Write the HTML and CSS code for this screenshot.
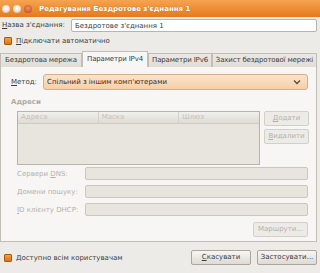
FILE: index.html
```html
<!DOCTYPE html>
<html lang="uk">
<head>
    <meta charset="UTF-8">
    <title>Редагування Бездротове з'єднання 1</title>
    <link rel="stylesheet" href="styles.css">
</head>
<body>
<div class="window">
    <div class="titlebar">
        <div class="wm-buttons">
            <span class="wm-btn"></span>
            <span class="wm-btn"></span>
            <span class="wm-btn close"></span>
        </div>
        <div class="title">Редагування Бездротове з'єднання 1</div>
    </div>

    <div class="content">
        <div class="name-row">
            <label><u>Н</u>азва з'єднання:</label>
            <div class="entry">Бездротове з'єднання 1</div>
        </div>

        <div class="check-row">
            <span class="check"></span>
            <span><u>П</u>ідключати автоматично</span>
        </div>

        <div class="tabs">
            <div class="tab t1">Бездротова мережа</div>
            <div class="tab t2 active">Параметри IPv4</div>
            <div class="tab t3">Параметри IPv6</div>
            <div class="tab t4">Захист бездротової мережі</div>
        </div>

        <div class="panel">
            <div class="method-row">
                <label><u>М</u>етод:</label>
                <div class="combo">
                    <span>Спільний з іншим комп'ютерами</span>
                    <svg width="8" height="6" viewBox="0 0 8 6"><path d="M1 1.5 L4 4.5 L7 1.5" fill="none" stroke="#5a4a3a" stroke-width="1.3"/></svg>
                </div>
            </div>

            <div class="section-title">Адреси</div>

            <div class="addr-row">
                <div class="table">
                    <div class="thead">
                        <div class="th">Адреса</div>
                        <div class="th">Маска</div>
                        <div class="th last">Шлюз</div>
                    </div>
                </div>
                <div class="side-buttons">
                    <div class="btn dis"><u>Д</u>одати</div>
                    <div class="btn dis"><u>В</u>идалити</div>
                </div>
            </div>

            <div class="fields">
                <div class="field">
                    <label>Сервери <u>D</u>NS:</label>
                    <div class="entry dis"></div>
                </div>
                <div class="field">
                    <label>Домени пошуку:</label>
                    <div class="entry dis"></div>
                </div>
                <div class="field">
                    <label><u>I</u>D клієнту DHCP:</label>
                    <div class="entry dis"></div>
                </div>
            </div>

            <div class="routes-row">
                <div class="btn dis">Маршрути...</div>
            </div>
        </div>

        <div class="footer">
            <div class="check-row">
                <span class="check"></span>
                <span>Доступно всім користувачам</span>
            </div>
            <div class="footer-buttons">
                <div class="btn"><u>С</u>касувати</div>
                <div class="btn">Застосувати...</div>
            </div>
        </div>
    </div>
</div>
</body>
</html>
```

FILE: styles.css
```css
body {
    margin: 0;
    font-family: "DejaVu Sans", sans-serif;
    font-size: 7px;
    color: #3c3c3c;
    background: #edebe8;
}
u {
    text-decoration: underline;
}
label, span {
    white-space: nowrap;
}
.window {
    width: 320px;
    height: 273px;
    display: flex;
    flex-direction: column;
    background: #edebe8;
    overflow: hidden;
}
.titlebar {
    height: 17px;
    display: flex;
    align-items: center;
    background: linear-gradient(#f6a450, #e47a1c);
    color: #fff;
    flex-shrink: 0;
}
.wm-buttons {
    display: flex;
    gap: 3px;
    width: 30px;
    margin-left: 2px;
    flex-shrink: 0;
}
.wm-btn {
    display: block;
    width: 8px;
    height: 8px;
    flex-shrink: 0;
    border-radius: 50%;
    background: radial-gradient(circle at 50% 40%, #fff 0, #f4e6d6 45%, #c9a880 100%);
}
.wm-btn.close {
    background: radial-gradient(circle at 50% 40%, #f09060 0, #d8603a 60%, #a8401c 100%);
}
.title {
    margin-left: 7px;
    font-weight: bold;
    font-size: 7px;
    white-space: nowrap;
    text-shadow: 0 0 1px #a85a10;
}
.content {
    flex: 1;
    display: flex;
    flex-direction: column;
    padding-right: 3px;
}
.name-row {
    display: flex;
    align-items: center;
    height: 14px;
    margin-top: 1px;
    padding-left: 2px;
}
.name-row label {
    width: 69px;
}
.entry {
    flex: 1;
    height: 13px;
    box-sizing: border-box;
    border: 1px solid #b8b3ab;
    border-radius: 2px;
    background: #fff;
    padding: 1px 3px;
    line-height: 10px;
}
.check-row {
    display: flex;
    align-items: center;
    gap: 4px;
    padding-left: 4px;
    height: 18px;
}
.check {
    width: 6px;
    height: 6px;
    border: 1px solid #a85c10;
    background: linear-gradient(#f6a040, #e07018);
    border-radius: 1px;
}
.tabs {
    display: flex;
    align-items: flex-end;
    height: 16px;
    margin-top: 1px;
}
.tab {
    height: 14px;
    line-height: 13px;
    box-sizing: border-box;
    border: 1px solid #c2bdb5;
    border-bottom: none;
    background: linear-gradient(#ece9e5, #e0dcd6);
    text-align: center;
    letter-spacing: -0.15px;
    white-space: nowrap;
    overflow: hidden;
}
.t1 { width: 82px; }
.t2 { width: 66px; }
.t3 { width: 64px; }
.t4 { width: 105px; }
.tab.active {
    height: 16px;
    line-height: 15px;
    background: #f7f6f5;
}
.panel {
    height: 175px;
    box-sizing: border-box;
    border: 1px solid #c2bdb5;
    border-top: none;
    background: #f7f6f5;
    padding: 7px 8px 0 10px;
    display: flex;
    flex-direction: column;
}
.method-row {
    display: flex;
    align-items: center;
    height: 16px;
}
.method-row label {
    width: 32px;
}
.combo {
    flex: 1;
    height: 16px;
    box-sizing: border-box;
    border: 1px solid #d4b08a;
    border-radius: 3px;
    background: linear-gradient(#fbe3cc, #f7cfa6);
    display: flex;
    align-items: center;
    justify-content: space-between;
    padding: 0 6px 0 3px;
    color: #3a2a1a;
}
.section-title {
    margin-top: 8px;
    font-weight: bold;
    color: #aeaaa4;
    height: 13px;
}
.addr-row {
    display: flex;
    gap: 4px;
    padding-left: 6px;
}
.table {
    width: 243px;
    height: 54px;
    box-sizing: border-box;
    border: 1px solid #b8b3ab;
    background: #e8e4de;
}
.thead {
    display: flex;
    height: 11px;
    background: linear-gradient(#f2f0ed, #dedad4);
    border-bottom: 1px solid #cfcac3;
}
.th {
    width: 79px;
    color: #c4c0ba;
    padding-left: 3px;
    line-height: 11px;
    border-right: 1px solid #d4d0ca;
}
.th.last {
    border-right: none;
}
.side-buttons {
    display: flex;
    flex-direction: column;
    gap: 3px;
}
.btn {
    height: 15px;
    box-sizing: border-box;
    border: 1px solid #aaa59d;
    border-radius: 2px;
    background: linear-gradient(#f7f6f4, #dedad4);
    padding: 0 6px;
    line-height: 13px;
    text-align: center;
    white-space: nowrap;
}
.side-buttons .btn {
    width: 45px;
    padding: 0;
}
.btn.dis {
    color: #b4b0aa;
    border-color: #d4d0c9;
    background: #edebe7;
}
.fields {
    margin-top: 2px;
    padding-left: 6px;
    display: flex;
    flex-direction: column;
    gap: 5px;
}
.field {
    display: flex;
    align-items: center;
    height: 13px;
}
.field label {
    width: 68px;
    color: #b4b0aa;
}
.entry.dis {
    background: #e8e4de;
    border-color: #cbc6be;
}
.routes-row {
    display: flex;
    justify-content: flex-end;
    margin-top: 6px;
}
.routes-row .btn {
    width: 55px;
    padding: 0;
}
.footer {
    flex: 1;
    display: flex;
    align-items: center;
    justify-content: space-between;
}
.footer-buttons {
    display: flex;
    gap: 6px;
}
.footer-buttons .btn {
    width: 60px;
    padding: 0;
}
```
